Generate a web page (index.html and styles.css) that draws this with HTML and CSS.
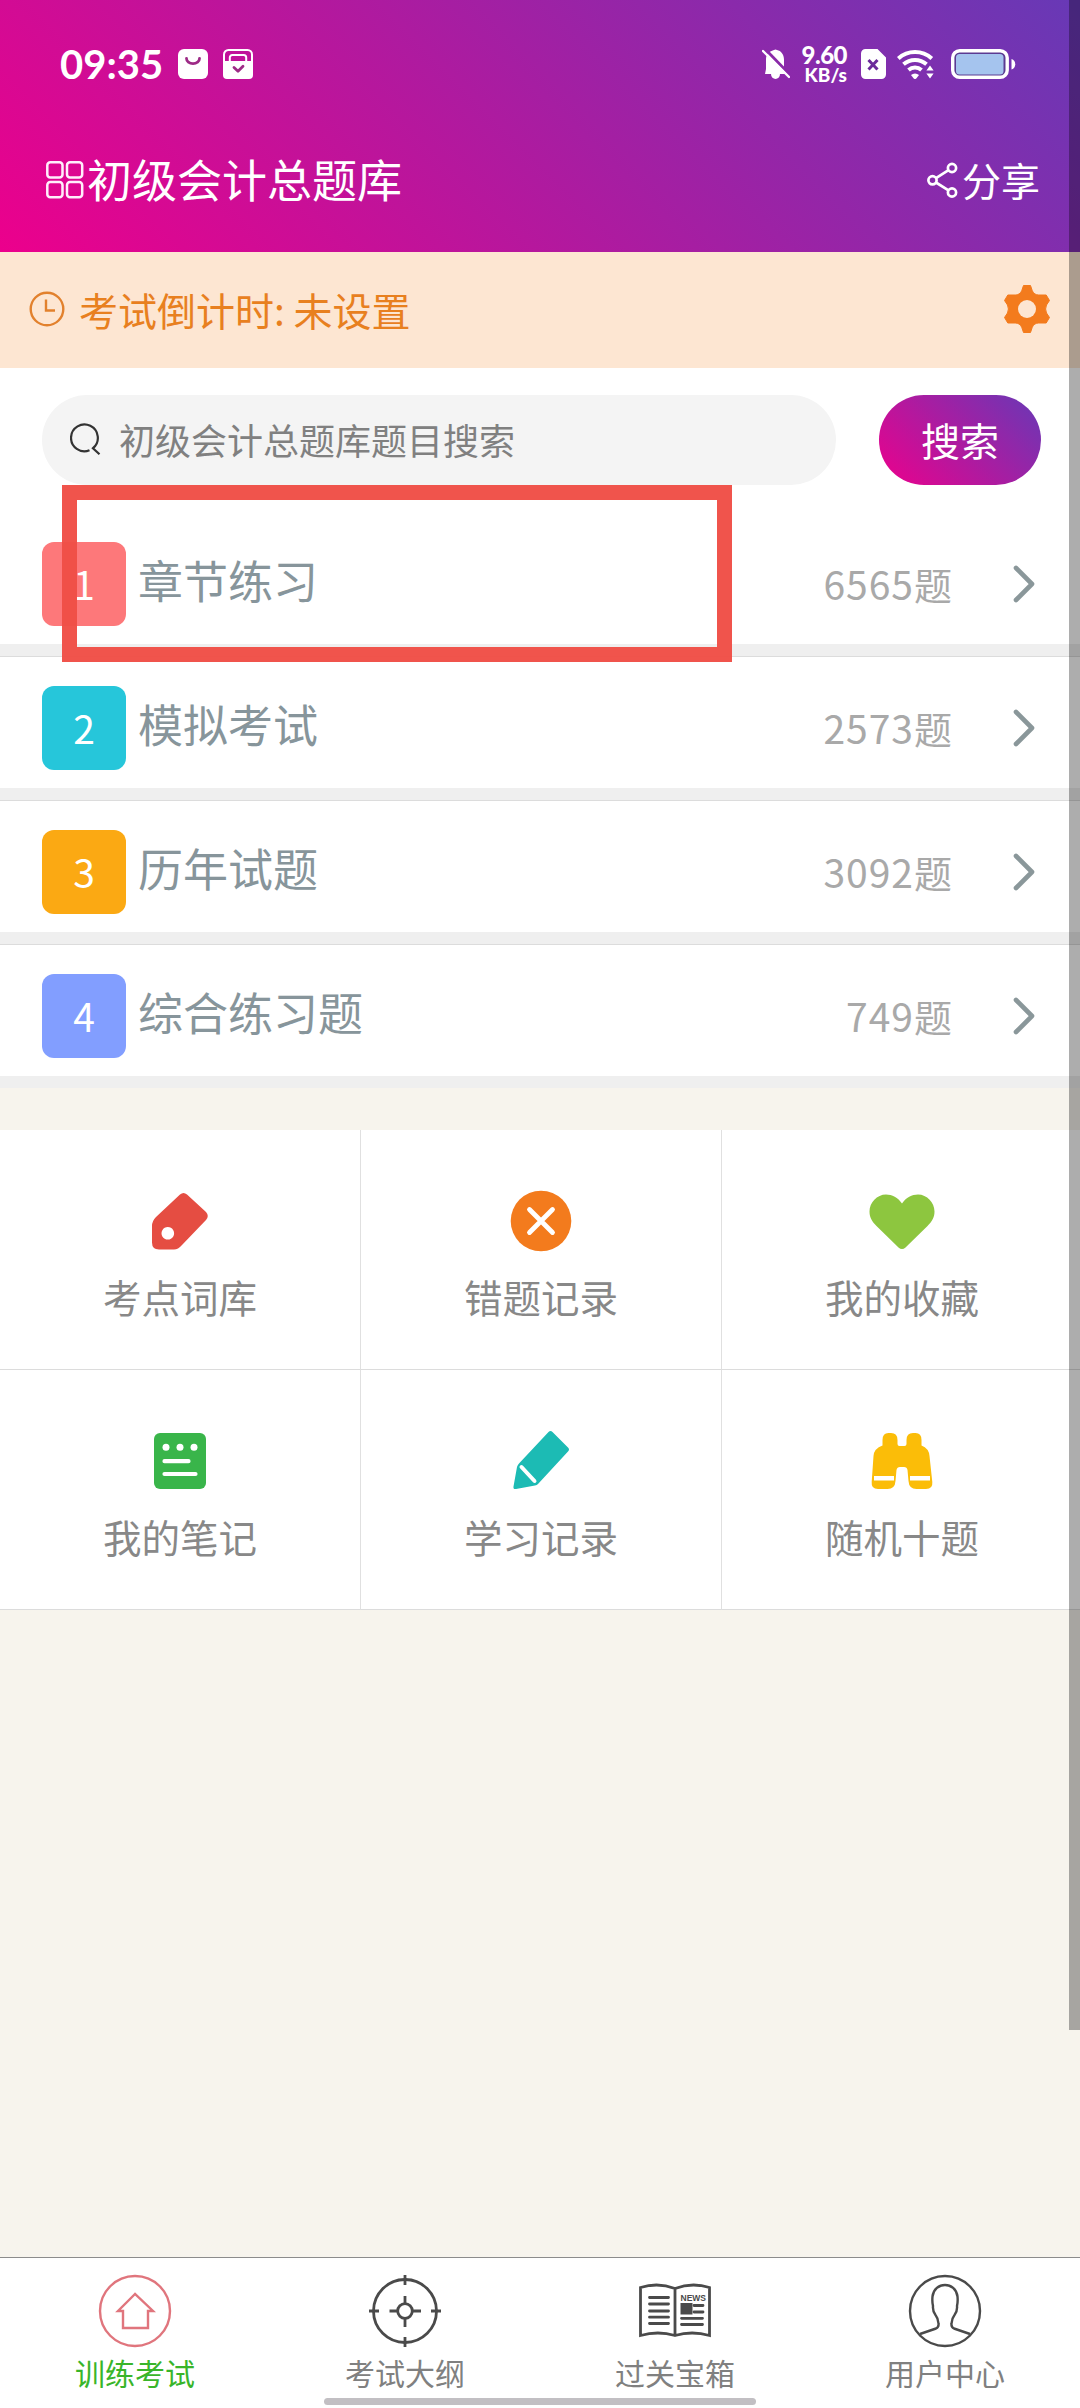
FILE: index.html
```html
<!DOCTYPE html>
<html lang="zh-CN">
<head>
<meta charset="utf-8">
<title>初级会计总题库</title>
<link rel="stylesheet" href="styles.css">
</head>
<body>
<div class="app">
  <header class="header">
    <div class="status">
      <span class="time">09:35</span>
      <svg class="st-app" width="30" height="30" viewBox="0 0 30 30"><rect width="30" height="30" rx="6" fill="#fff"/><path d="M8.5 9.5a6.5 5.2 0 0 0 13 0" fill="none" stroke="#9d2a86" stroke-width="2.8" stroke-linecap="round"/></svg>
      <svg class="st-bag" width="30" height="30" viewBox="0 0 30 30"><path d="M1 12V5.500a4.500 4.500 0 0 1 4.500-4.500h19a4.500 4.500 0 0 1 4.500 4.500V12" fill="none" stroke="#fff" stroke-width="2"/><path d="M6.800 13V8.500a2.500 2.500 0 0 1 2.500-2.500h11.400a2.500 2.500 0 0 1 2.500 2.500V13" fill="none" stroke="#fff" stroke-width="2"/><path d="M0 12h30v14a4 4 0 0 1-4 4H4a4 4 0 0 1-4-4z" fill="#fff"/><path d="M11 18.500l4 3.700 5-5" fill="none" stroke="#9d2a86" stroke-width="2.800" stroke-linecap="round" stroke-linejoin="round"/></svg>
      <span class="grow"></span>
      <svg class="st-bell" width="28" height="31" viewBox="0 0 28 31"><path d="M3 27.500h21v-1.500l-2-3V13c0-5-3-9-7-9.600a3.200 3.200 0 0 0-3 0C6.500 5 4 8 4 13v9.500z" fill="#fff" transform="translate(0 -2.500)"/><path d="M9 25h9a4.500 5 0 0 1-9 0z" fill="#fff"/><path d="M2.500-.5l27 28" stroke="#8a2aa8" stroke-width="3"/><path d="M1 2l26 26" stroke="#fff" stroke-width="2.400" stroke-linecap="round"/></svg>
      <span class="speed"><b>9.60</b><i>KB/s</i></span>
      <svg class="st-sim" width="25" height="30" viewBox="0 0 25 30"><path d="M4.500 0h12L25 8.500V25.500a4.500 4.500 0 0 1-4.500 4.500h-16A4.500 4.500 0 0 1 0 25.500v-21A4.500 4.500 0 0 1 4.500 0z" fill="#fff"/><path d="M7.500 11l9 9.500M16.500 11l-9 9.500" stroke="#6a2a9a" stroke-width="3"/></svg>
      <svg class="st-wifi" width="37" height="30" viewBox="0 0 37 30"><g fill="none" stroke="#fff" stroke-width="4"><path d="M1.300 9.500a25 25 0 0 1 33.500 0"/><path d="M6.500 15.200a17.500 17.500 0 0 1 23 0"/><path d="M11.500 21a10 10 0 0 1 13 0"/></g><path d="M14 26a6 6 0 0 1 8 0l-2.500 3.200a2 2 0 0 1-3 0z" fill="#fff"/><path d="M30 15h8v16h-8z" fill="#7b2fae"/><path d="M33 16.500l3.600 5h-7.200zM33 29.500l3.600-5h-7.200z" fill="#fff"/></svg>
      <svg class="st-bat" width="65" height="31" viewBox="0 0 65 31"><rect x="1.700" y="1.700" width="54.500" height="26.600" rx="7" fill="#5b3a92" stroke="#fff" stroke-width="3.400"/><rect x="5" y="5" width="47.500" height="20.500" rx="3.500" fill="#a5c4ee"/><path d="M60.500 10c5 1.500 5 9 0 10.500z" fill="#fff"/></svg>
    </div>
    <div class="titlebar">
      <svg width="38" height="38" viewBox="0 0 38 38"><g fill="none" stroke="#ffeefb" stroke-width="2.500"><rect x="1.300" y="1.300" width="15.200" height="15.200" rx="3"/><rect x="21" y="1.300" width="15.200" height="15.200" rx="3"/><rect x="1.300" y="21" width="15.200" height="15.200" rx="3"/><rect x="21" y="21" width="15.200" height="15.200" rx="3"/></g></svg>
      <h1 class="title">初级会计总题库</h1>
      <span class="grow"></span>
      <svg width="31" height="37" viewBox="0 0 31 37"><g fill="none" stroke="#fff" stroke-width="2.700"><circle cx="5.500" cy="18.300" r="4.100"/><circle cx="25" cy="6" r="4.100"/><circle cx="25" cy="30.500" r="4.100"/><path d="M9 16.100L21.500 8.200M9 20.500l12.500 7.800"/></g></svg>
      <span class="share">分享</span>
    </div>
  </header>

  <section class="notice">
    <svg width="36" height="36" viewBox="0 0 36 36"><g fill="none" stroke="#e2812d" stroke-width="2.400"><circle cx="18" cy="18" r="16.300"/><path d="M17 8.500v11h9"/></g></svg>
    <span class="notice-text">考试倒计时: 未设置</span>
    <span class="grow"></span>
    <svg width="48" height="50" viewBox="0 0 48 50"><path fill="#f37b1d" stroke="#f37b1d" stroke-linejoin="round" d="M20.500 1.500h7l1.800 5.300q2 4.200 6.500 4.200h7.400l3.300 5.500-3 4.500q-1.800 4 0 8l3 4.500-3.300 5.500h-7.400q-4.500 0-6.500 4.200l-1.800 5.300h-7l-1.800-5.300q-2-4.200-6.500-4.200H4.800L1.500 33.500l3-4.500q1.800-4 0-8l-3-4.500L4.800 11h7.400q4.500 0 6.500-4.200z"/><circle cx="24" cy="25" r="9" fill="#fde6d2"/></svg>
  </section>

  <section class="search">
    <div class="search-field">
      <svg width="32" height="32" viewBox="0 0 32 32"><g fill="none" stroke="#333" stroke-width="2.200"><path d="M19.500 27.300a13.400 13.400 0 1 1 3.500-2.100l6.500 6"/></g></svg>
      <span>初级会计总题库题目搜索</span>
    </div>
    <button class="search-btn">搜索</button>
  </section>

  <section class="list">
    <div class="row"><span class="num n1">1</span><span class="name">章节练习</span><span class="count"><b>6565</b>题</span><svg class="chev" width="22" height="38" viewBox="0 0 22 38"><path d="M3 3l16 16L3 35"/></svg></div>
    <div class="row"><span class="num n2">2</span><span class="name">模拟考试</span><span class="count"><b>2573</b>题</span><svg class="chev" width="22" height="38" viewBox="0 0 22 38"><path d="M3 3l16 16L3 35"/></svg></div>
    <div class="row"><span class="num n3">3</span><span class="name">历年试题</span><span class="count"><b>3092</b>题</span><svg class="chev" width="22" height="38" viewBox="0 0 22 38"><path d="M3 3l16 16L3 35"/></svg></div>
    <div class="row"><span class="num n4">4</span><span class="name">综合练习题</span><span class="count"><b>749</b>题</span><svg class="chev" width="22" height="38" viewBox="0 0 22 38"><path d="M3 3l16 16L3 35"/></svg></div>
    <div class="marker"></div>
  </section>

  <section class="grid">
    <div class="cell"><svg width="68" height="62" viewBox="0 0 68 62"><path fill="#e54d42" fill-rule="evenodd" d="M34 4.500q3.500-3 7 0L60 22q3.500 4 0 8L36 55q-4 4.500-8 4.500H13q-7 0-7-7V36q0-5 4-9zM21.800 37a6.300 6.300 0 1 0 .01 0z"/></svg><span>考点词库</span></div>
    <div class="cell"><svg width="68" height="62" viewBox="0 0 68 62"><circle cx="34" cy="31" r="30.300" fill="#f37b1d"/><path d="M22.500 19.500l23 23M45.500 19.500l-23 23" stroke="#fff" stroke-width="4.800" stroke-linecap="round"/></svg><span>错题记录</span></div>
    <div class="cell"><svg width="68" height="62" viewBox="0 0 68 62"><path fill="#8dc63f" d="M34 13.500C38 7.500 44 4.500 50 4.500c9 0 16.500 8 16.500 17 0 6-2.500 10-7 14.500L37.500 57.500q-3.500 3-7 0L8.500 36C4 31.500 1.500 27.500 1.500 21.500c0-9 7.500-17 16.500-17 6 0 12 3 16 9z"/></svg><span>我的收藏</span></div>
    <div class="cell"><svg width="68" height="62" viewBox="0 0 68 62"><rect x="8" y="3" width="52" height="56" rx="6" fill="#39b54a"/><g fill="#fff"><circle cx="20" cy="17.300" r="3.500"/><circle cx="34" cy="17.300" r="3.500"/><circle cx="48" cy="17.300" r="3.500"/></g><path d="M18.500 31.200h24M18.500 44h31" stroke="#fff" stroke-width="4.200" stroke-linecap="round"/></svg><span>我的笔记</span></div>
    <div class="cell"><svg width="68" height="62" viewBox="0 0 68 62"><path fill="#1cbbb4" d="M41.500 2q2-2 4 0L61 17.500q2 2 0 4L31 54q-1 1-3 1.500L9 59q-3 .5-2.500-2.500L10 37q.5-2 2-3.500z"/><path d="M14.500 37l13 14" stroke="#fff" stroke-width="4" stroke-linecap="round"/></svg><span>学习记录</span></div>
    <div class="cell"><svg width="68" height="62" viewBox="0 0 68 62"><path fill="#fbbd08" d="M14.500 10Q14.500 3 20.500 3h2.500q6.500 0 6.500 7v4q0 2 2 2h5q2 0 2-2v-4q0-7 6.500-7h2.500q6 0 6 7v5.500q7.500 3 8 10.500l2.800 26q.7 7-6.300 7h-9.500q-7.500 0-8-8l-1-11q-.5-3-3.500-3h-4q-3 0-3.500 3l-1 11q-.5 8-8 8H10q-7 0-6.300-7L5.500 26q.5-7.500 9-10.500z"/><path d="M6 48.200h20M42 48.200h20" stroke="#fff" stroke-width="4.400"/></svg><span>随机十题</span></div>
  </section>

  <nav class="nav">
    <div class="tab active"><svg width="74" height="74" viewBox="0 0 74 74"><g fill="none" stroke="#e0757d" stroke-width="2.400"><circle cx="37" cy="37" r="35"/><path d="M37 20L20 37h5v17h25V37h5z"/></g></svg><span>训练考试</span></div>
    <div class="tab"><svg width="74" height="74" viewBox="0 0 74 74"><g fill="none" stroke="#4a4a4a" stroke-width="2.800"><circle cx="37" cy="37" r="31.500"/><circle cx="37" cy="37" r="7.300"/><path d="M37 1v10M37 63v10M1 37h10M63 37h10M37 22v8M37 44v9M21.500 37h8M44.500 37H53"/></g></svg><span>考试大纲</span></div>
    <div class="tab"><svg width="74" height="74" viewBox="0 0 74 74"><g fill="none" stroke="#4a4a4a" stroke-width="2.800"><path d="M2.500 61.500V13.500Q20 8 37 14.500Q54 8 71.500 13.500v48Q54 56.500 37 61.500Q20 56.500 2.500 61.500zM37 14v48"/><path d="M11.500 23.500h19M11.500 30h19M11.500 37h19M11.500 43.200h19M11.500 49.500h19M43.500 44.300h21M43.500 50.500h21M56 31.500h9M56 38h9" stroke-linecap="round"/></g><path d="M42.500 29h12v11.500h-12z" fill="#4a4a4a"/><text x="42.500" y="26.500" class="news" textLength="25.500" lengthAdjust="spacingAndGlyphs">NEWS</text></svg><span>过关宝箱</span></div>
    <div class="tab"><svg width="74" height="74" viewBox="0 0 74 74"><g fill="none" stroke="#4a4a4a" stroke-width="2.400"><circle cx="37" cy="37" r="35"/><path d="M12 60l16-5.500q3-1.200 2.500-5Q30 44 27.500 41q-3-4-2.500-9-1-4-.5-9.500C25.500 15 31 11 37 11s11.500 4 12.500 11.500q.5 5.500-.5 9.500.5 5-2.500 9-2.500 3-3 8.500-.5 3.800 2.500 5L62 60"/></g></svg><span>用户中心</span></div>
    <div class="home-bar"></div>
  </nav>
  <div class="scrollbar"></div>
</div>
</body>
</html>
```
FILE: styles.css
```css
* { box-sizing: border-box; }
body {
  margin: 0;
  font-family: "Noto Sans CJK SC", sans-serif;
  color: #808080;
}
svg { display: block; flex: none; }
.app {
  position: relative;
  width: 1080px;
  height: 2408px;
  overflow: hidden;
  display: flex;
  flex-direction: column;
  background: #f7f4ed;
}
.grow { flex: 1; }

.header {
  height: 252px;
  background: linear-gradient(45deg, #ec008c, #6739b6);
  color: #fff;
}
.status {
  display: flex;
  align-items: center;
  height: 128px;
  padding: 0 64px 0 60px;
}
.time {
  width: 118px;
  font-family: Lato, sans-serif;
  font-size: 40px;
  font-weight: 700;
  line-height: 40px;
}
.st-bag { margin-left: 15px; }
.st-bell { margin-right: 10px; }
.speed {
  display: flex;
  flex-direction: column;
  align-items: flex-end;
  width: 47px;
  margin-right: 14px;
  font-family: Lato, sans-serif;
}
.speed b { font-size: 24px; font-weight: 900; line-height: 21px; letter-spacing: -0.5px; }
.speed i { font-size: 19px; font-weight: 900; line-height: 20px; font-style: normal; }
.st-wifi { margin: 0 17px 0 11px; }
.titlebar {
  display: flex;
  align-items: center;
  height: 104px;
  padding: 0 40px 0 46px;
}
.title { margin: -3px 0 0 3px; font-size: 45px; font-weight: 400; line-height: 60px; }
.share { margin: -3px 0 0 4px; font-size: 39px; line-height: 56px; }

.notice {
  display: flex;
  align-items: center;
  height: 116px;
  padding: 0 29px 2px 29px;
  background: #fde6d2;
  color: #e8801f;
  font-size: 39px;
}
.notice-text { margin: -1px 0 0 14px; line-height: 56px; }

.search {
  display: flex;
  justify-content: space-between;
  height: 144px;
  padding: 27px 39px 0 42px;
  background: #fff;
}
.search-field {
  display: flex;
  align-items: center;
  gap: 17px;
  width: 794px;
  height: 90px;
  padding: 0 0 2px 28px;
  border-radius: 45px;
  background: #f4f4f4;
  font-size: 36px;
}
.search-btn {
  width: 162px;
  height: 90px;
  padding: 0 0 3px;
  border: 0;
  border-radius: 45px;
  background: linear-gradient(45deg, #ec008c, #6739b6);
  color: #fff;
  font: 400 39px "Noto Sans CJK SC", sans-serif;
}

.list { position: relative; background: #fff; }
.row {
  display: flex;
  align-items: center;
  height: 144px;
  padding: 0 45px 0 42px;
  border-bottom: 12px solid #efefef;
  box-shadow: inset 0 1px 0 #dcdcdc;
}
.row:first-child { box-shadow: none; }
.num {
  width: 84px;
  height: 84px;
  margin-top: 12px;
  border-radius: 12px;
  color: #fff;
  font-size: 39px;
  line-height: 82px;
  text-align: center;
}
.n1 { background: #fd787a; }
.n2 { background: #26c6da; }
.n3 { background: #fba913; }
.n4 { background: #829eff; }
.name { flex: 1; margin: 2px 0 0 12px; color: #87959b; font-size: 45px; }
.count { margin: 9px 61px 0 0; color: #a9a9a9; font-size: 38px; }
.count b { font-size: 39px; font-weight: 400; letter-spacing: 1px; }
.chev { margin-top: 12px; }
.chev path {
  fill: none;
  stroke: #8a979a;
  stroke-width: 4.6;
  stroke-linecap: round;
  stroke-linejoin: round;
}
.marker {
  position: absolute;
  left: 62px;
  top: -27px;
  width: 670px;
  height: 177px;
  border: 15px solid rgba(239, 78, 70, .97);
}

.grid {
  display: grid;
  grid-template-columns: 361px 361px 358px;
  grid-auto-rows: 240px;
  margin-top: 42px;
  background: #fff;
}
.cell {
  display: flex;
  flex-direction: column;
  align-items: center;
  padding-top: 60px;
  border-right: 1px solid #e0e0e0;
  border-bottom: 1px solid #dcdcdc;
  color: #888;
  font-size: 38.5px;
}
.cell span { margin-top: 16px; line-height: 56px; }
.cell:nth-child(3n) { border-right: 0; padding-left: 2px; }

.nav {
  position: relative;
  display: grid;
  grid-template-columns: repeat(4, 1fr);
  height: 151px;
  margin-top: auto;
  border-top: 1px solid #8c8c8c;
  background: #fff;
}
.tab {
  display: flex;
  flex-direction: column;
  align-items: center;
  padding-top: 16px;
  color: #808080;
  font-size: 30px;
}
.tab span { margin-top: 2px; line-height: 44px; }
.tab.active { color: #39b52a; }
.news { font: 900 9.500px "Liberation Sans", sans-serif; fill: #4a4a4a; }
.home-bar {
  position: absolute;
  left: 324px;
  bottom: 3px;
  width: 432px;
  height: 7px;
  border-radius: 4px;
  background: #c2bfc3;
}
.scrollbar {
  position: absolute;
  top: 0;
  right: 0;
  width: 11px;
  height: 2030px;
  background: rgba(0, 0, 0, .32);
}
```
